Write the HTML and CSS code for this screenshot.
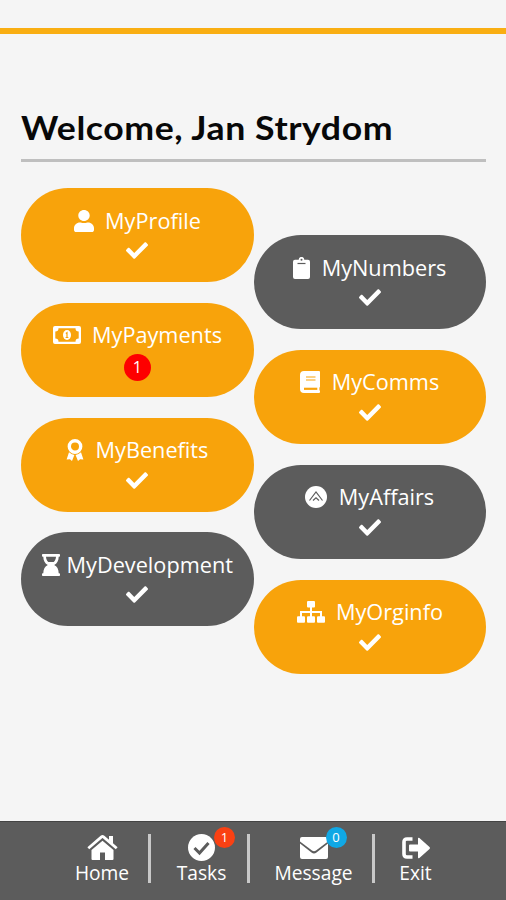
FILE: index.html
```html
<!DOCTYPE html>
<html lang="en">
<head>
<meta charset="utf-8">
<title>Home</title>
<link rel="stylesheet" href="styles.css">
</head>
<body>
<svg class="defs" width="0" height="0" aria-hidden="true">
  <symbol id="check" viewBox="0 64 512 384"><path d="M173.898 439.404l-166.4-166.4c-9.997-9.997-9.997-26.206 0-36.204l36.203-36.204c9.997-9.998 26.207-9.998 36.204 0L192 312.69 432.095 72.596c9.997-9.997 26.207-9.997 36.204 0l36.203 36.204c9.997 9.997 9.997 26.206 0 36.204l-294.4 294.401c-9.998 9.997-26.207 9.997-36.204-.001z"/></symbol>
</svg>
<header class="topbar"></header>
<main class="content">
  <h1 class="welcome"><span>Welcome, Jan Strydom</span></h1>
  <div class="menu">
    <div class="column">
      <a class="pill orange">
        <span class="title"><svg width="20" height="22" viewBox="0 0 448 512" preserveAspectRatio="none"><path d="M224 256c70.7 0 128-57.3 128-128S294.7 0 224 0 96 57.3 96 128s57.3 128 128 128zm89.6 32h-16.7c-22.2 10.2-46.9 16-72.9 16s-50.6-5.8-72.9-16h-16.7C60.2 288 0 348.2 0 422.4V464c0 26.5 21.5 48 48 48h352c26.5 0 48-21.5 48-48v-41.6c0-74.2-60.2-134.4-134.4-134.4z"/></svg><span>MyProfile</span></span>
        <svg class="check"><use href="#check"/></svg>
      </a>
      <a class="pill orange">
        <span class="title"><svg width="28" height="18" viewBox="0 0 28 18"><path fill-rule="evenodd" d="M2 0h24a2 2 0 0 1 2 2v14a2 2 0 0 1-2 2H2a2 2 0 0 1-2-2V2a2 2 0 0 1 2-2zM5.500 2.300A3.200 3.200 0 0 1 2.300 5.500v7a3.200 3.200 0 0 1 3.200 3.200h17a3.200 3.200 0 0 1 3.200-3.200v-7a3.200 3.200 0 0 1-3.200-3.200z"/><ellipse cx="14" cy="9" rx="4" ry="5"/><path class="cut-line" d="M12.800 7.400l1.200-.8v4.900m-1.400 0h2.800"/></svg><span>MyPayments</span></span>
        <span class="count">1</span>
      </a>
      <a class="pill orange">
        <span class="title"><svg width="18" height="22" viewBox="0 0 18 22"><circle class="ring" cx="9" cy="7.500" r="5.700"/><path d="M3 13.300l2.500 1.800L8.400 16 6 22 3.900 20.300.6 20.600zM15 13.300l-2.500 1.800-2.900.9 2.400 6 2.100-1.700 3.300.3z"/></svg><span>MyBenefits</span></span>
        <svg class="check"><use href="#check"/></svg>
      </a>
      <a class="pill gray">
        <span class="title tight"><svg width="18" height="22" viewBox="0 0 18 22"><path fill-rule="evenodd" d="M.8 0h16.400a.8.8 0 0 1 .8.8V2a.8.8 0 0 1-.8.8h-.5c0 4-1.700 6.800-4.500 8.200 2.800 1.400 4.500 4.200 4.500 8.200h.5a.8.8 0 0 1 .8.8v1.200a.8.8 0 0 1-.8.8H.8a.8.8 0 0 1-.8-.8V20a.8.8 0 0 1 .8-.8h.5c0-4 1.700-6.800 4.500-8.200C3 9.600 1.300 6.800 1.300 2.800H.8A.8.8 0 0 1 0 2V.8A.8.8 0 0 1 .8 0zM4 2.800c.2 2.400.9 4 2.300 5.200h5.400c1.400-1.200 2.100-2.800 2.300-5.200z"/></svg><span>MyDevelopment</span></span>
        <svg class="check"><use href="#check"/></svg>
      </a>
    </div>
    <div class="column lower">
      <a class="pill gray">
        <span class="title"><svg width="17" height="22" viewBox="0 0 17 22"><path d="M2 2.700h3.700a2.800 2.800 0 0 1 5.600 0H15a2 2 0 0 1 2 2V20a2 2 0 0 1-2 2H2a2 2 0 0 1-2-2V4.700a2 2 0 0 1 2-2z"/><circle class="cut" cx="8.500" cy="2.700" r="1"/><path class="cut-line" d="M4.500 6.500h8"/></svg><span>MyNumbers</span></span>
        <svg class="check"><use href="#check"/></svg>
      </a>
      <a class="pill orange">
        <span class="title"><svg width="20" height="22" viewBox="0 0 20 22"><path d="M4 0h15a1 1 0 0 1 1 1v14.500a1 1 0 0 1-.6 1v2.700a.8.8 0 0 1 .6.8v1a1 1 0 0 1-1 1H4a4 4 0 0 1-4-4V4a4 4 0 0 1 4-4z"/><path class="cut-line" d="M6 6h9.500M6 9h9.500"/><path class="band" d="M4 17.800h13.300"/></svg><span>MyComms</span></span>
        <svg class="check"><use href="#check"/></svg>
      </a>
      <a class="pill gray">
        <span class="title"><svg width="22" height="22" viewBox="0 0 22 22"><circle cx="11" cy="11" r="11"/><path class="cut-line" d="M4.500 14.500L11 6l6.500 8.500M8 14.500l3-2.700 3 2.700"/></svg><span>MyAffairs</span></span>
        <svg class="check"><use href="#check"/></svg>
      </a>
      <a class="pill orange">
        <span class="title"><svg width="28" height="22" viewBox="0 0 28 22"><rect x="10" y="0" width="8" height="6.500" rx="1"/><rect x="0" y="15.200" width="8" height="6.500" rx="1"/><rect x="10" y="15.200" width="8" height="6.500" rx="1"/><rect x="20" y="15.200" width="8" height="6.500" rx="1"/><path class="link" d="M14 6v10M4 16v-4.900h20V16"/></svg><span>MyOrginfo</span></span>
        <svg class="check"><use href="#check"/></svg>
      </a>
    </div>
  </div>
</main>
<nav class="nav">
  <a class="tab home"><span class="glyph"><svg width="31" height="25" viewBox="0 0 31 25"><path d="M15.500 5.700L4.500 15v9a1 1 0 0 0 1 1H13v-7.500h5V25h7.500a1 1 0 0 0 1-1v-9z"/><path class="roof" d="M1.300 13.300L14.500 1.900q1-.8 2 0l13.200 11.400"/><path d="M22 1h4v8l-4-3.500z"/></svg></span><span>Home</span></a>
  <a class="tab tasks"><span class="glyph"><svg width="27" height="27" viewBox="0 0 27 27"><circle cx="13.500" cy="13.500" r="13.500"/><path class="tick" d="M6.500 14l5 5 9-10"/></svg><span class="badge red">1</span></span><span>Tasks</span></a>
  <a class="tab message"><span class="glyph"><svg width="28" height="22" viewBox="0 0 28 22"><path d="M2 0h24a2 2 0 0 1 2 2v2.500l-12 9q-2 1.500-4 0L0 4.500V2a2 2 0 0 1 2-2z"/><path d="M0 6.500l11.500 9q2.500 1.800 5 0L28 6.500V20a2 2 0 0 1-2 2H2a2 2 0 0 1-2-2z"/></svg><span class="badge blue">0</span></span><span>Message</span></a>
  <a class="tab exit"><span class="glyph"><svg width="28" height="22" viewBox="0 0 28 22"><path class="door" d="M10.500 2H5Q2 2 2 5v12q0 3 3 3h5.500"/><path d="M8 7.500h8V1.700q0-1.700 1.400-.6L27.500 10q.9 1 0 2L17.400 20.900q-1.400 1.100-1.400-.6V14.500H8a1 1 0 0 1-1-1v-5a1 1 0 0 1 1-1z"/></svg></span><span>Exit</span></a>
</nav>
</body>
</html>
```
FILE: styles.css
```css
* { box-sizing: border-box; }
body {
  margin: 0;
  height: 900px;
  display: flex;
  flex-direction: column;
  background: #f5f5f5;
  font-family: "Open Sans", "Noto Sans", sans-serif;
  color: #fff;
}
svg { display: block; fill: #fff; flex: none; }
.defs { display: none; }
.topbar { height: 34px; border-bottom: 6px solid #f9ae12; }
.content { flex: 1; padding: 73px 20px 0 21px; }
.welcome {
  margin: 0;
  height: 55px;
  border-bottom: 3px solid #bfbfbf;
  font: 700 32.500px/42px Lato, sans-serif;
  letter-spacing: 0.500px;
  white-space: nowrap;
  color: #080808;
}
.welcome span { display: inline-block; transform: scaleX(1.097); transform-origin: left; }
.menu { display: grid; grid-template-columns: 1fr 1fr; padding-top: 26px; }
.column { display: flex; flex-direction: column; gap: 20.800px; }
.lower { padding-top: 47.200px; }
.pill {
  --tone: #f8a30b;
  height: 94px;
  padding-top: 17.500px;
  border-radius: 47px;
  background: var(--tone);
  display: flex;
  flex-direction: column;
  align-items: center;
}
.gray { --tone: #5c5c5c; }
.title {
  height: 30px;
  display: flex;
  align-items: center;
  gap: 11.500px;
  font-size: 21.700px;
  line-height: 30px;
  white-space: nowrap;
}
.tight { gap: 7px; }
.check { width: 22px; height: 17px; margin-top: 6.500px; }
.count {
  width: 27px;
  height: 27px;
  margin-top: 3.500px;
  border-radius: 50%;
  background: #fe0000;
  font-size: 16px;
  line-height: 27px;
  text-align: center;
}
.cut { fill: var(--tone); }
.cut-line { fill: none; stroke: var(--tone); stroke-width: 1.200; }
.band { stroke: var(--tone); stroke-width: 2.200; }
.ring { fill: none; stroke: #fff; stroke-width: 3.400; }
.link { fill: none; stroke: #fff; stroke-width: 2; }
.nav {
  height: 79px;
  padding: 12px 0 0 54px;
  display: flex;
  align-items: flex-start;
  background: #5c5c5c;
  border-top: 1px solid #444;
}
.tab {
  height: 49px;
  display: flex;
  flex-direction: column;
  align-items: center;
  border-right: 3px solid #c8c8c8;
  font-size: 19.200px;
  line-height: 24px;
}
.home { width: 97px; padding-left: 2px; }
.tasks { width: 99px; padding-left: 5px; }
.message { width: 125px; padding-left: 5px; }
.exit { width: 81px; border-right: 0; }
.glyph { position: relative; flex: none; height: 27px; display: flex; align-items: center; }
.badge {
  position: absolute;
  left: 26px;
  top: -7px;
  width: 21px;
  height: 21px;
  border-radius: 50%;
  font-size: 13px;
  line-height: 21px;
  text-align: center;
}
.red { background: #fa4113; }
.blue { background: #10a8e5; }
.roof { fill: none; stroke: #fff; stroke-width: 2.800; }
.tick { fill: none; stroke: #5c5c5c; stroke-width: 3; }
.door { fill: none; stroke: #fff; stroke-width: 3.600; }
```
